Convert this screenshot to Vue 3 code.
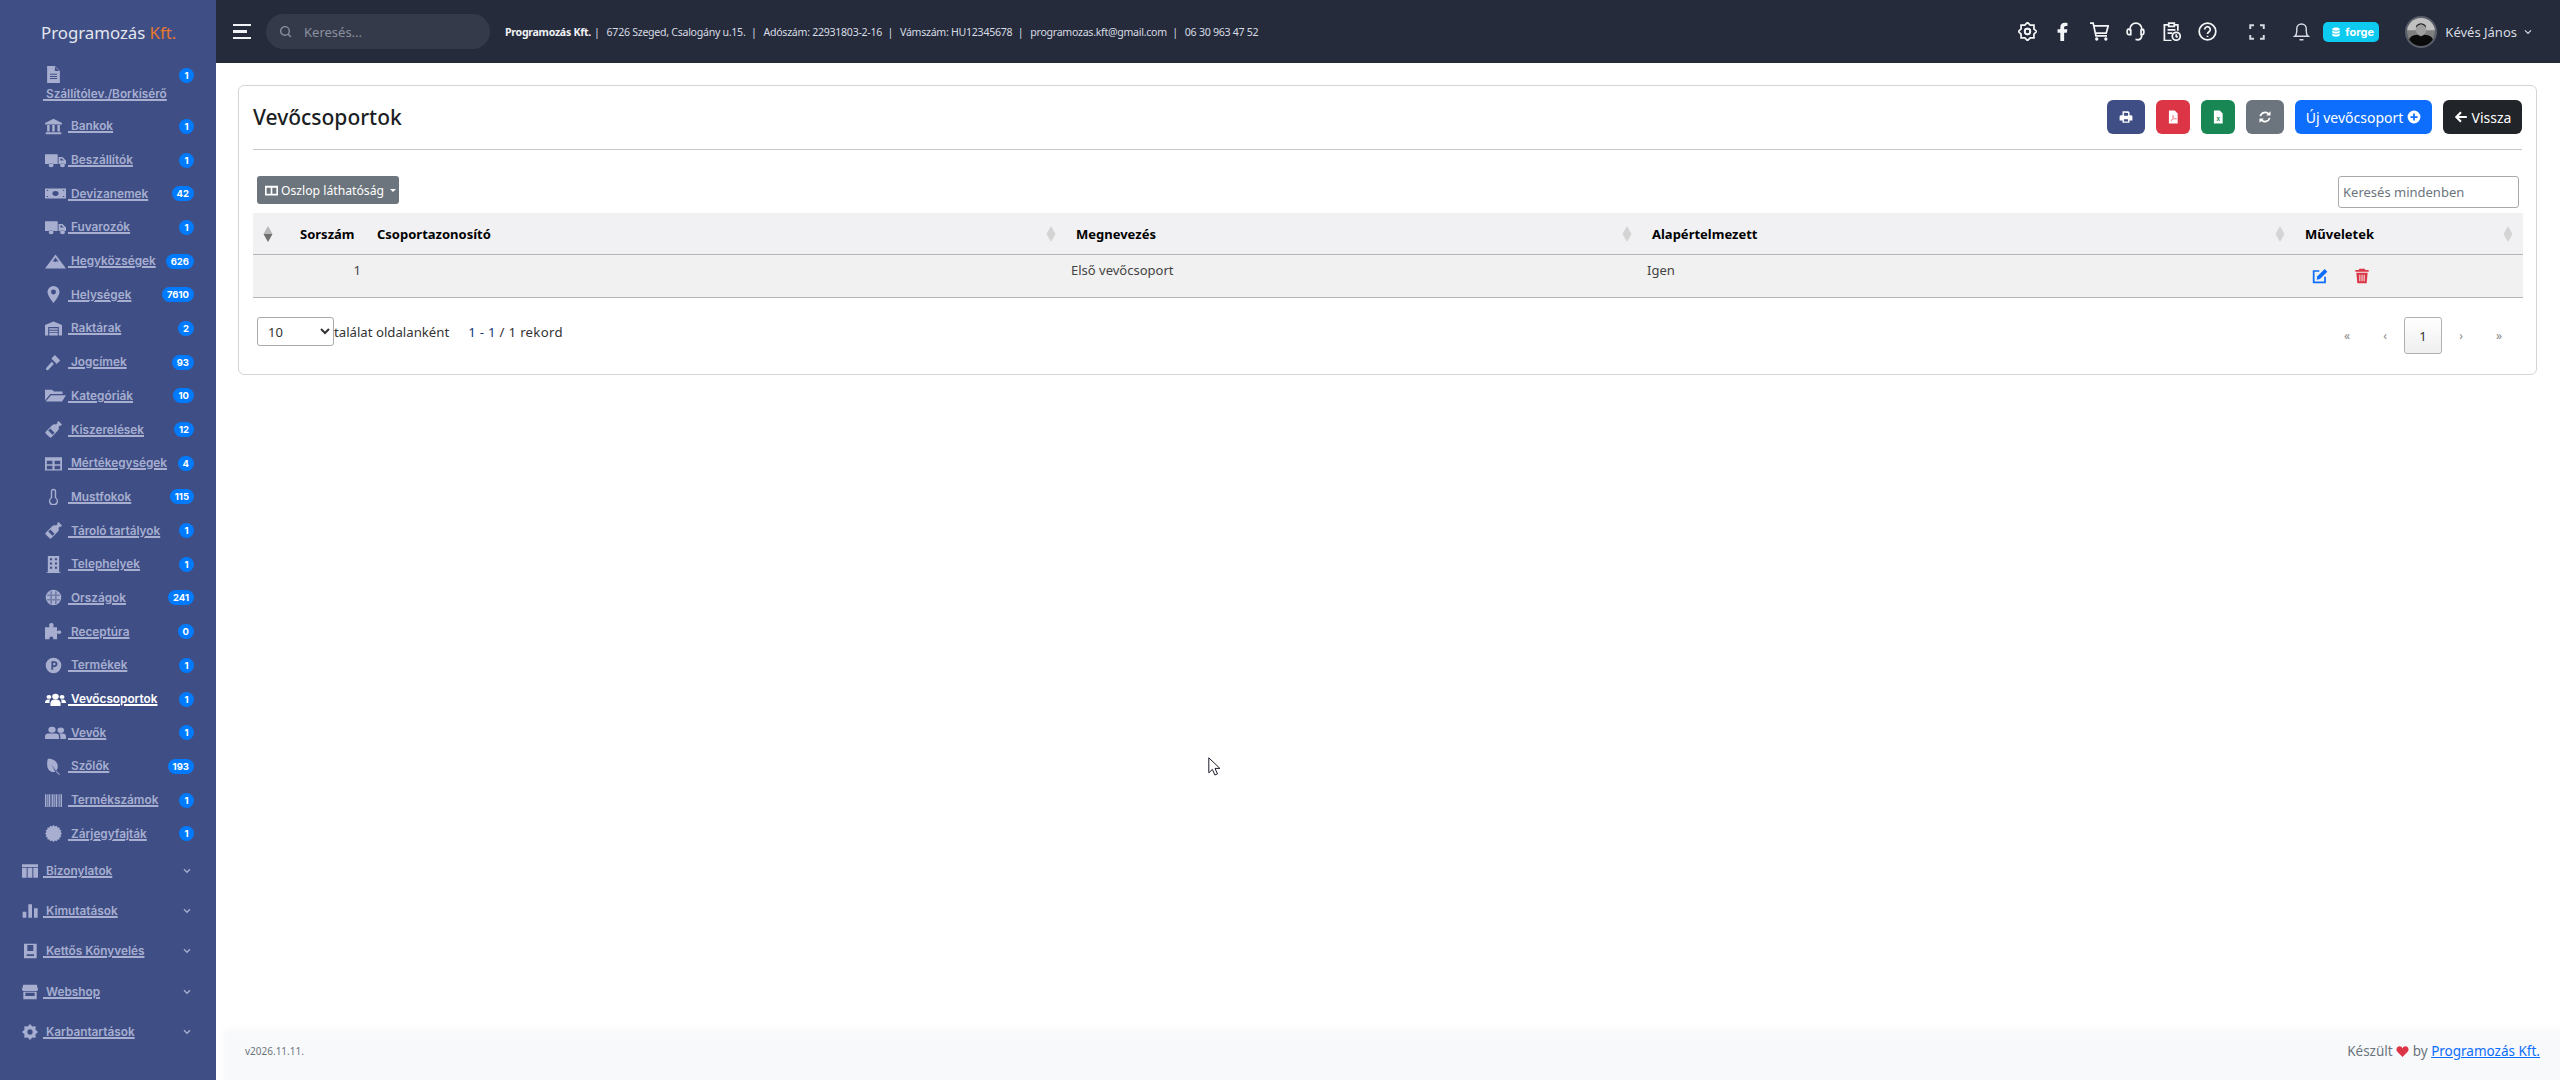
<script setup>
// csillag / fogaskerék alakzat generálása
function burst(n, R, r, hole) {
    let d = ''
    for (let i = 0; i < n * 2; i++) {
        const rad = i % 2 ? r : R
        const a = (Math.PI * i) / n
        d += (i ? 'L' : 'M') + (12 + rad * Math.sin(a)).toFixed(2) + ' ' + (12 - rad * Math.cos(a)).toFixed(2)
    }
    d += 'z'
    if (hole) {
        d += `M12 ${12 - hole}a${hole} ${hole} 0 1 0 0 ${hole * 2} ${hole} ${hole} 0 0 0 0-${hole * 2}z`
    }
    return d
}

const truck = 'M0 3h14.5v14H9.6a3 3 0 0 0-5.2 0H0zM15.5 7H20l4 5v5h-1.400a3 3 0 0 0-5.200 0h-1.900zM17.500 9v3h4l-2.400-3zM7 16a2.800 2.800 0 1 1 0 5.600A2.800 2.800 0 0 1 7 16zM20 16a2.800 2.800 0 1 1 0 5.600 2.800 2.800 0 0 1 0-5.600z'
const bottle = 'M19 0l5 5-2 2-.8-.8-2.200 2.200c1 2 .5 4-1 5.500L9 23a2 2 0 0 1-2.500 0L1 17.500a2 2 0 0 1 0-2.500l9.100-9c1.500-1.500 3.500-2 5.500-1l2.200-2.200-.8-.8zM7.500 10.500l6 6-3 3-6-6z'

const icons = {
    file: 'M3 0h11l7 7v17H3zM14 1v6h6zM7 11h10v1.500H7zM7 14h10v1.500H7zM7 17h10v1.500H7z',
    bank: 'M12 1l12 6v2H0V7zM3 10h3.500v9H3zM10.200 10h3.500v9h-3.500zM17.500 10H21v9h-3.500zM1 20h22v3H1z',
    truck,
    money: 'M0 5h24v14H0zM12 8.500a3.500 3.500 0 1 0 0 7 3.500 3.500 0 0 0 0-7zM2 7h1.500v1.500H2zM20.500 7H22v1.500h-1.500zM2 15.500h1.500V17H2zM20.500 15.500H22V17h-1.500z',
    mountain: 'M12 2l12 20H0zM12 6.500l-3.500 6 2.200-1 1.300 1.500 1.300-1.500 2.200 1z',
    marker: 'M12 0a8.500 8.500 0 0 1 8.500 8.500C20.500 14 12 24 12 24S3.500 14 3.500 8.500A8.500 8.500 0 0 1 12 0zM12 5a3.500 3.500 0 1 0 0 7 3.500 3.500 0 0 0 0-7z',
    warehouse: 'M0 7l12-5 12 5v15h-4.500V10h-15v12H0zM6 11.500h12v2.300H6zM6 15h12v2.300H6zM6 18.500h12V22H6z',
    gavel: 'M14 1.500L21.500 9l-5 5L9 6.500zM9.500 11l3 3-8 8.500q-1.500 1-2.700-.2-1-1.300-.1-2.500z',
    folder: 'M0 4h8l2.500 2.500H20V10H6L0 19zM6.800 11.500H24l-4.500 9H.8z',
    bottle,
    grid: 'M0 3h24v19H0zM2.500 8h8v5h-8zM13.500 8h8v5h-8zM2.500 15h8v5h-8zM13.500 15h8v5h-8z',
    thermo: 'M12 1a3.800 3.800 0 0 1 3.800 3.800v8.500a6.500 6.500 0 1 1-7.600 0V4.800A3.800 3.800 0 0 1 12 1zM12 3a1.800 1.800 0 0 0-1.800 1.800V14a4.500 4.500 0 1 0 3.600 0V4.800A1.800 1.800 0 0 0 12 3z',
    building: 'M4 0h16v23h2v1H2v-1h2zM7 3v3h3V3zM14 3v3h3V3zM7 9v3h3V9zM14 9v3h3V9zM7 15v3h3v-3zM14 15v3h3v-3z',
    globe: 'M12 1a11 11 0 1 0 0 22 11 11 0 0 0 0-22zM3 8h18v1.200H3zM3 14.800h18V16H3zM8 3h1.200v18H8zM14.800 3H16v18h-1.200z',
    puzzle: 'M0 6h6.500C5 3 6 0 9 0s4 3 2.500 6H17v5.500c2.500-1.500 6-1 6 1.500s-3.500 3-6 1.500V23H11.500c1-2-.5-4-2.500-4s-3.500 2-2.500 4H0z',
    product: 'M12 1a11 11 0 1 0 0 22 11 11 0 0 0 0-22zM9 6h4.500a4 4 0 0 1 0 8h-2v4H9zM11.500 8.500v3h2a1.500 1.500 0 0 0 0-3z',
    users: 'M12 4a3.800 3.800 0 1 1 0 7.600A3.800 3.800 0 0 1 12 4zM4.500 5.500a2.800 2.800 0 1 1 0 5.600 2.800 2.800 0 0 1 0-5.600zM19.500 5.500a2.800 2.800 0 1 1 0 5.600 2.800 2.800 0 0 1 0-5.600zM0 17q0-5 3.500-5H6Q4.500 14 5.200 17zM24 17q0-5-3.500-5H18q1.500 2 .8 5zM6.300 21q-1-8 3.700-9h4q4.700 1 3.700 9z',
    friends: 'M8 4a4.200 4.200 0 1 1 0 8.400A4.200 4.200 0 0 1 8 4zM18 5a3.800 3.800 0 1 1 0 7.600A3.800 3.800 0 0 1 18 5zM0 21v-3q0-4.500 4-4.500h8q4 0 4 4.500v3zM17.500 21v-4q0-2-1.500-3.500h4q4 0 4 4.500v3z',
    leaf: 'M4 1c8 0 14 4 14 11 0 3-1 5-2.500 6L9 9l5.500 10.500C9 21 3 17 3 9q0-5 1-8zM16 18.500l5 4.500-1 1-5-5z',
    barcode: 'M0 3h2v18H0zM3 3h1v18H3zM5 3h2v18H5zM8 3h1v18H8zM10 3h2v18h-2zM13 3h1v18h-1zM15 3h2v18h-2zM18 3h1v18h-1zM20 3h1v18h-1zM22 3h2v18h-2z',
    seal: burst(16, 12, 10.200),
    columns: 'M0 2h24v4H0zM0 7h7v15H0zM8.500 7h7v15h-7zM17 7h7v15h-7z',
    chart: 'M1 13h5.500v9H1zM9.500 2H15v20H9.500zM18 8h5.500v14H18z',
    book: 'M3 1h19v22H3zM8 3v9h9V3zM7 17h11v2.500H7z',
    store: 'M2 1h20l2 7q0 3-3 3H3q-3 0-3-3zM2 12h20v11H2zM5 13v5h14v-5z',
    cog: burst(8, 12, 9, 4)
}

const wideIcons = ['truck', 'money', 'mountain', 'folder', 'users', 'friends']

const items = [
    { label: 'Szállítólev./Borkísérő', icon: 'file', count: 1, wrap: true },
    { label: 'Bankok', icon: 'bank', count: 1 },
    { label: 'Beszállítók', icon: 'truck', count: 1 },
    { label: 'Devizanemek', icon: 'money', count: 42 },
    { label: 'Fuvarozók', icon: 'truck', count: 1 },
    { label: 'Hegyközségek', icon: 'mountain', count: 626 },
    { label: 'Helységek', icon: 'marker', count: 7610 },
    { label: 'Raktárak', icon: 'warehouse', count: 2 },
    { label: 'Jogcímek', icon: 'gavel', count: 93 },
    { label: 'Kategóriák', icon: 'folder', count: 10 },
    { label: 'Kiszerelések', icon: 'bottle', count: 12 },
    { label: 'Mértékegységek', icon: 'grid', count: 4 },
    { label: 'Mustfokok', icon: 'thermo', count: 115 },
    { label: 'Tároló tartályok', icon: 'bottle', count: 1 },
    { label: 'Telephelyek', icon: 'building', count: 1 },
    { label: 'Országok', icon: 'globe', count: 241 },
    { label: 'Receptúra', icon: 'puzzle', count: 0 },
    { label: 'Termékek', icon: 'product', count: 1 },
    { label: 'Vevőcsoportok', icon: 'users', count: 1, active: true },
    { label: 'Vevők', icon: 'friends', count: 1 },
    { label: 'Szőlők', icon: 'leaf', count: 193 },
    { label: 'Termékszámok', icon: 'barcode', count: 1 },
    { label: 'Zárjegyfajták', icon: 'seal', count: 1 }
]

const groups = [
    { label: 'Bizonylatok', icon: 'columns' },
    { label: 'Kimutatások', icon: 'chart' },
    { label: 'Kettős Könyvelés', icon: 'book' },
    { label: 'Webshop', icon: 'store' },
    { label: 'Karbantartások', icon: 'cog' }
]

const columns = [
    { label: '', width: 37, dark: true },
    { label: 'Sorszám', width: 77, noSort: true },
    { label: 'Csoportazonosító', width: 699 },
    { label: 'Megnevezés', width: 576 },
    { label: 'Alapértelmezett', width: 653 },
    { label: 'Műveletek', width: 228 }
]

const gearPath = burst(8, 11.500, 8.800, 3.500)
</script>

<template>
    <div class="app">
        <aside class="sidebar">
            <div class="logo">Programozás <span>Kft.</span></div>
            <nav class="nav">
                <div v-for="item in items" :key="item.label" class="item" :class="{ wrap: item.wrap, active: item.active }">
                    <a class="link" href="#" @click.prevent>
                        <svg class="icon" :class="{ wide: wideIcons.includes(item.icon) }" viewBox="0 0 24 24" preserveAspectRatio="none"><path :d="icons[item.icon]" /></svg>
                        <span class="text">&nbsp;{{ item.label }}</span>
                    </a>
                    <span class="badge">{{ item.count }}</span>
                </div>
                <div v-for="group in groups" :key="group.label" class="group">
                    <a class="link" href="#" @click.prevent>
                        <svg class="icon" viewBox="0 0 24 24"><path :d="icons[group.icon]" /></svg>
                        <span class="text">&nbsp;{{ group.label }}</span>
                    </a>
                    <svg class="chevron" viewBox="0 0 12 8"><path d="M1.500 1.500L6 6l4.500-4.500" /></svg>
                </div>
            </nav>
        </aside>

        <div class="main">
            <header class="topbar">
                <div class="burger"><i></i><i class="short"></i><i></i></div>
                <label class="top-search">
                    <svg viewBox="0 0 24 24"><circle cx="11" cy="11" r="8" /><path d="M17 17l5 5" /></svg>
                    <input type="text" placeholder="Keresés..." />
                </label>
                <div class="company">
                    <b>Programozás Kft.</b>
                    <span>|</span>6726 Szeged, Csalogány u.15.
                    <span>|</span>Adószám: 22931803-2-16
                    <span>|</span>Vámszám: HU12345678
                    <span>|</span>programozas.kft@gmail.com
                    <span>|</span>06 30 963 47 52
                </div>
                <div class="top-icons">
                    <svg class="ti" viewBox="0 0 24 24"><path :d="gearPath" /><circle cx="12" cy="12" r="3.500" /></svg>
                    <svg class="ti solid" viewBox="0 0 24 24"><path d="M8 24V13.500H4.500V9H8V6.500C8 3 10 1 13.500 1c1.700 0 3.500.3 3.500.3v3.900h-2c-1.700 0-2.200 1-2.200 2.100V9h4.100l-.7 4.500h-3.400V24z" /></svg>
                    <svg class="ti" viewBox="0 0 24 24"><path d="M0 1.500h4l3.500 16h14M5.500 5h17.500l-2.500 9H7" /><circle cx="8.500" cy="21.500" r="1" /><circle cx="20" cy="21.500" r="1" /></svg>
                    <svg class="ti" viewBox="0 0 24 24"><path d="M5 11V9a7.500 7.500 0 0 1 15 0v2M5 9H3.500a2 2 0 0 0-2 2v3a2 2 0 0 0 2 2H6V9M19 9h1.500a2 2 0 0 1 2 2v3a2 2 0 0 1-2 2H19V9M20 16c0 3-1.500 6-5 6.500l-3-.5" /></svg>
                    <svg class="ti" viewBox="0 0 24 24"><path d="M8.500 3.500H3v20h9M15.500 3.500H20V11M8.500 1.500h7v4h-7zM7 10h10M7 14h6" /><circle cx="18" cy="18" r="5" fill="#252b3b" /><path d="M18 15.500v2.700l1.800 1" /></svg>
                    <svg class="ti" viewBox="0 0 24 24"><circle cx="12" cy="12" r="10.500" /><path d="M8.500 9.500a3.500 3.500 0 1 1 5.500 2.800c-1.300.9-2 1.500-2 3M12 17.500v1.500" /></svg>
                </div>
                <svg class="ti full" viewBox="0 0 24 24"><path d="M3 8V3h5M16 3h5v5M21 16v5h-5M8 21H3v-5" /></svg>
                <svg class="ti bell" viewBox="0 0 24 24"><path d="M3.500 18c2-1.500 2.500-3.500 2.500-6V8.500a6 6 0 0 1 12 0V12c0 2.500.5 4.500 2.500 6zM9.500 22.500h5" /></svg>
                <span class="forge">
                    <svg viewBox="0 0 24 24"><path d="M12 1c5 0 9 1.500 9 4s-4 4-9 4-9-1.500-9-4 4-4 9-4zM3 8c1.500 2 5 3 9 3s7.500-1 9-3v4c0 2.500-4 4-9 4s-9-1.500-9-4zM3 15c1.500 2 5 3 9 3s7.500-1 9-3v4c0 2.500-4 4-9 4s-9-1.500-9-4z" /></svg>
                    forge
                </span>
                <div class="avatar">
                    <svg viewBox="0 0 32 32">
                        <rect width="32" height="32" fill="#7f7f7f" />
                        <rect width="32" height="14" fill="#c0c0c0" />
                        <ellipse cx="16" cy="13" rx="6" ry="7" fill="#9f9f9f" />
                        <path d="M10 11q6-8 12 0l-1-3q-5-4-10 0z" fill="#222" />
                        <path d="M1 32q0-13 11-13l4 2 4-2q11 0 11 13z" fill="#0a0a0a" />
                    </svg>
                </div>
                <span class="user">Kévés János</span>
                <svg class="user-chevron" viewBox="0 0 12 8"><path d="M1.500 1.500L6 6l4.500-4.500" /></svg>
            </header>

            <main class="content">
                <section class="card">
                    <div class="card-head">
                        <h1>Vevőcsoportok</h1>
                        <div class="actions">
                            <button class="btn icon-btn print">
                                <svg viewBox="0 0 24 24"><path fill="#fff" fill-rule="evenodd" d="M6 2h10l2 2v5h2.500A2.500 2.500 0 0 1 23 11.500V18h-5v4H6v-4H1v-6.500A2.500 2.500 0 0 1 3.500 9H6zM8.500 4.500V10h7V5zM8.500 16v3.500h7V16z" /></svg>
                            </button>
                            <button class="btn icon-btn pdf">
                                <svg viewBox="0 0 24 24"><path fill="#fff" d="M5 1h10l5 5v17H5z" /><path fill="none" stroke="#f58a8f" stroke-width="1.400" d="M8 19c3-2 5-7 4-10-1 4 3 7 6 6-3-1-7 1-10 4z" /></svg>
                            </button>
                            <button class="btn icon-btn excel">
                                <svg viewBox="0 0 24 24"><path fill="#fff" d="M5 1h10l5 5v17H5z" /><text x="12.500" y="19" text-anchor="middle" font-size="11" font-weight="700" fill="#198754" font-family="Liberation Sans, sans-serif">x</text></svg>
                            </button>
                            <button class="btn icon-btn refresh">
                                <svg viewBox="0 0 24 24"><path fill="none" stroke="#fff" stroke-width="3" d="M4 10.500A8.500 8.500 0 0 1 18.500 7M20 13.500A8.500 8.500 0 0 1 5.500 17" /><path fill="#fff" d="M21.500 2v7.500H14zM2.500 22v-7.500H10z" /></svg>
                            </button>
                            <button class="btn new">Új vevőcsoport
                                <svg viewBox="0 0 24 24"><path fill="#fff" fill-rule="evenodd" d="M12 1a11 11 0 1 0 0 22 11 11 0 0 0 0-22zM10.500 6h3v4.500H18v3h-4.500V18h-3v-4.500H6v-3h4.500z" /></svg>
                            </button>
                            <button class="btn back">
                                <svg viewBox="0 0 24 24"><path fill="none" stroke="#fff" stroke-width="3.600" d="M12 4l-8 8 8 8M4.500 12H22" /></svg>
                                Vissza
                            </button>
                        </div>
                    </div>

                    <div class="toolbar">
                        <button class="columns-btn">
                            <svg viewBox="0 0 24 24"><path fill="#fff" fill-rule="evenodd" d="M0 3h24v18H0zM3 7v11h7.500V7zM13.500 7v11H21V7z" /></svg>
                            Oszlop láthatóság
                            <i class="caret"></i>
                        </button>
                        <input class="filter" type="text" placeholder="Keresés mindenben" />
                    </div>

                    <table class="grid">
                        <colgroup>
                            <col v-for="col in columns" :key="col.label" :style="{ width: col.width + 'px' }" />
                        </colgroup>
                        <thead>
                            <tr>
                                <th v-for="col in columns" :key="col.label">
                                    <div class="th-inner">
                                        <span>{{ col.label }}</span>
                                        <svg v-if="!col.noSort" class="sort" :class="{ dark: col.dark }" viewBox="0 0 10 16">
                                            <path class="up" d="M5 0l4.500 8H.5z" />
                                            <path class="down" d="M5 16l4.500-8H.5z" />
                                        </svg>
                                    </div>
                                </th>
                            </tr>
                        </thead>
                        <tbody>
                            <tr>
                                <td></td>
                                <td class="num">1</td>
                                <td></td>
                                <td>Első vevőcsoport</td>
                                <td>Igen</td>
                                <td>
                                    <div class="row-actions">
                                        <svg viewBox="0 0 24 24"><path fill="none" stroke="#0d6efd" stroke-width="2.600" d="M11 4.500H2.500v17h17V13" /><path fill="#0d6efd" d="M19 1.500l4 4-11 11-5 1 1-5z" /></svg>
                                        <svg viewBox="0 0 24 24"><path fill="#dc3545" fill-rule="evenodd" d="M8 1h8l1 2h5v2.500H2V3h5zM3.500 7h17L19 23H5zM8 10v10h1.500V10zM11.300 10v10h1.500V10zM14.500 10v10H16V10z" /></svg>
                                    </div>
                                </td>
                            </tr>
                        </tbody>
                    </table>

                    <div class="pager-row">
                        <div class="per-page">
                            <select class="size"><option>10</option></select>
                            <span>találat oldalanként</span>
                            <span class="range"><em>1 - 1</em> / 1 rekord</span>
                        </div>
                        <div class="pager">
                            <span>«</span><span>‹</span><span class="current">1</span><span>›</span><span>»</span>
                        </div>
                    </div>
                </section>
            </main>

            <footer class="footer">
                <span class="version">v2026.11.11.</span>
                <span class="credit">Készült
                    <svg viewBox="0 0 24 24"><path fill="#dc3545" d="M12 22L2.500 12.500C-1 8.500 1.500 2.500 6.500 2.500c2.500 0 4.500 1.500 5.500 3.500 1-2 3-3.500 5.500-3.500 5 0 7.500 6 4 10z" /></svg>
                    by <a href="#" @click.prevent>Programozás Kft.</a></span>
            </footer>
        </div>

        <svg class="cursor" viewBox="0 0 12 19"><path d="M.8.800v15l3.600-3.400 2.500 5.600 2.600-1.100-2.500-5.500h4.900z" fill="#fff" stroke="#1c1c2c" stroke-width="1" /></svg>
    </div>
</template>

<style>
html,
body {
    margin: 0;
    background: #fff;
}
</style>

<style scoped>
.app {
    position: relative;
    display: flex;
    height: 1080px;
    overflow: hidden;
    font-family: "Noto Sans", "Open Sans", sans-serif;
    color: #212529;
}

.sidebar {
    width: 216px;
    flex-shrink: 0;
    background: #3f4f85;
    overflow: hidden;
}

.logo {
    height: 64px;
    line-height: 66px;
    padding-left: 41px;
    font-size: 16.8px;
    color: #e4e6ee;
}

.logo span {
    color: #e5762f;
}

.nav {
    font-family: Inter, "Noto Sans", sans-serif;
    font-size: 11.8px;
    font-weight: 600;
    color: #a7aed0;
}

.item {
    height: 33.7px;
    display: flex;
    align-items: center;
    justify-content: space-between;
    padding: 0 22px 0 45px;
}

.item.wrap {
    height: 45.5px;
    align-items: flex-start;
}

.item.wrap .link {
    display: block;
    width: 124px;
    margin-top: 2px;
}

.item.wrap .icon {
    display: block;
    margin-bottom: 4px;
}

.item.wrap .text {
    margin-left: -2px;
}

.item.wrap .badge {
    margin-top: 4px;
}

.item.active {
    color: #fff;
}

.link {
    display: flex;
    align-items: center;
    color: inherit;
    white-space: nowrap;
}

.icon {
    width: 17px;
    height: 17px;
    margin-right: 6px;
    flex-shrink: 0;
    fill: currentColor;
    fill-rule: evenodd;
}

.icon.wide {
    width: 21px;
    margin-right: 2px;
}

.text {
    text-decoration: underline;
    text-underline-offset: 2px;
}

.badge {
    min-width: 15px;
    height: 15px;
    padding: 0 5px;
    box-sizing: border-box;
    border-radius: 8px;
    background: #007bff;
    color: #fff;
    font-size: 9.5px;
    font-weight: 700;
    line-height: 15px;
    text-align: center;
}

.group {
    height: 40.3px;
    display: flex;
    align-items: center;
    justify-content: space-between;
    padding: 0 25px 0 22px;
}

.group .icon {
    width: 16px;
    height: 16px;
    margin-right: 5px;
}

.chevron {
    width: 8px;
    height: 6px;
    fill: none;
    stroke: #a7aed0;
    stroke-width: 2;
}

.main {
    flex: 1;
    min-width: 0;
    display: flex;
    flex-direction: column;
}

.topbar {
    height: 63px;
    flex-shrink: 0;
    display: flex;
    align-items: center;
    padding: 0 0 0 17px;
    background: #252b3b;
    color: #e0e3ea;
}

.burger {
    width: 18px;
    display: flex;
    flex-direction: column;
    gap: 4px;
}

.burger i {
    display: block;
    height: 2.500px;
    background: #f1f2f5;
}

.burger i.short {
    width: 14px;
}

.top-search {
    width: 224px;
    height: 35px;
    margin-left: 15px;
    padding-left: 13px;
    box-sizing: border-box;
    display: flex;
    align-items: center;
    gap: 10px;
    background: #343a4a;
    border-radius: 18px;
}

.top-search svg {
    width: 13px;
    height: 13px;
    flex-shrink: 0;
    fill: none;
    stroke: #8a909e;
    stroke-width: 2.600;
}

.top-search input {
    width: 160px;
    border: 0;
    outline: 0;
    background: none;
    font: 13px "Noto Sans", sans-serif;
    color: #fff;
}

.top-search input::placeholder {
    color: #8a909e;
}

.company {
    margin-left: 15px;
    font-size: 10.6px;
    letter-spacing: -0.28px;
    white-space: nowrap;
    color: #d8dbe3;
}

.company b {
    color: #f1f2f5;
}

.company span {
    margin: 0 7px 0 3px;
}

.top-icons {
    margin-left: auto;
    display: flex;
    align-items: center;
    gap: 17px;
}

.ti {
    width: 19px;
    height: 19px;
    fill: none;
    stroke: #f4f5f7;
    stroke-width: 2.200;
    flex-shrink: 0;
}

.ti.solid {
    fill: #f4f5f7;
    stroke: none;
}

.full {
    margin-left: 31px;
    width: 18px;
    height: 18px;
    stroke: #d8dbe3;
    stroke-width: 2.600;
}

.bell {
    margin-left: 26px;
    stroke: #d8dbe3;
    stroke-width: 1.800;
}

.forge {
    width: 56px;
    height: 20px;
    margin-left: 12px;
    box-sizing: border-box;
    padding-left: 8px;
    display: flex;
    align-items: center;
    gap: 4px;
    background: #0dcaf0;
    border-radius: 5px;
    color: #fff;
    font-family: Inter, sans-serif;
    font-size: 11px;
    font-weight: 700;
}

.forge svg {
    width: 10px;
    height: 10px;
    fill: #fff;
}

.avatar {
    width: 32px;
    height: 32px;
    margin-left: 26px;
    box-sizing: border-box;
    border: 2px solid #5a5f6b;
    border-radius: 50%;
    overflow: hidden;
    flex-shrink: 0;
}

.avatar svg {
    display: block;
    width: 100%;
    height: 100%;
}

.user {
    margin-left: 8px;
    font-size: 13px;
    color: #d8dbe3;
    white-space: nowrap;
}

.user-chevron {
    width: 8px;
    height: 6px;
    margin: 0 28px 0 7px;
    fill: none;
    stroke: #d8dbe3;
    stroke-width: 1.800;
}

.content {
    flex: 1;
    padding: 22px 23px 0 22px;
}

.card {
    border: 1px solid #d5d5d5;
    border-radius: 6px;
    padding: 14px 14px 0;
    height: 290px;
    box-sizing: border-box;
}

.card-head {
    display: flex;
    align-items: center;
    justify-content: space-between;
    height: 50px;
    padding-bottom: 15px;
    box-sizing: border-box;
    border-bottom: 1px solid #c8c8c8;
}

.card-head h1 {
    margin: 0;
    font-size: 21px;
    font-weight: 500;
    color: #1a1e24;
}

.actions {
    display: flex;
    gap: 11px;
}

.btn {
    height: 34px;
    border: 0;
    border-radius: 6px;
    padding: 0;
    display: flex;
    align-items: center;
    justify-content: center;
    gap: 4px;
    color: #fff;
    font: 14px "Noto Sans", sans-serif;
    white-space: nowrap;
}

.btn svg {
    width: 14px;
    height: 14px;
}

.icon-btn.print,
.icon-btn.refresh {
    width: 38px;
}

.icon-btn.pdf,
.icon-btn.excel {
    width: 34px;
}

.print {
    background: #3f4f85;
}

.pdf {
    background: #dc3545;
}

.excel {
    background: #198754;
}

.refresh {
    background: #6c757d;
}

.new {
    width: 137px;
    background: #0d6efd;
}

.back {
    width: 79px;
    background: #212529;
}

.toolbar {
    display: flex;
    align-items: flex-start;
    justify-content: space-between;
    padding: 26px 3px 0 4px;
    height: 63px;
    box-sizing: border-box;
}

.columns-btn {
    width: 142px;
    height: 28px;
    border: 0;
    border-radius: 3px;
    padding: 0 0 0 8px;
    display: flex;
    align-items: center;
    gap: 3px;
    background: #6c757d;
    color: #fff;
    font: 12.2px "Noto Sans", sans-serif;
    white-space: nowrap;
}

.columns-btn svg {
    width: 13px;
    height: 13px;
}

.caret {
    margin-left: 3px;
    border-top: 3px solid #fff;
    border-left: 3px solid transparent;
    border-right: 3px solid transparent;
}

.filter {
    width: 181px;
    height: 32px;
    box-sizing: border-box;
    border: 1px solid #aaa;
    border-radius: 3px;
    padding: 0 4px;
    outline: 0;
    font: 13px "Noto Sans", sans-serif;
}

.filter::placeholder {
    color: #6c757d;
}

.grid {
    width: 2270px;
    table-layout: fixed;
    border-collapse: collapse;
    font-size: 13px;
}

.grid th {
    height: 41px;
    padding: 0 10px;
    background: #f1f1f3;
    border-bottom: 1px solid #b5b5b5;
    text-align: left;
    font-weight: 700;
    color: #000;
}

.grid th:first-child {
    padding-right: 17px;
}

.th-inner {
    display: flex;
    align-items: center;
    justify-content: space-between;
    white-space: nowrap;
}

.sort {
    width: 10px;
    height: 16px;
    flex-shrink: 0;
}

.sort path {
    fill: #d4d4d4;
}

.sort.dark .down {
    fill: #6f6f6f;
}

.sort.dark .up {
    fill: #b8b8b8;
}

.grid td {
    height: 43px;
    padding: 6px 5px 0;
    box-sizing: border-box;
    vertical-align: top;
    background: #f1f1f1;
    border-bottom: 1px solid #b5b5b5;
    color: #444;
}

.grid td.num {
    text-align: right;
    padding-right: 6px;
}

.row-actions {
    display: flex;
    gap: 26px;
    padding: 7px 0 0 12px;
}

.row-actions svg {
    width: 16px;
    height: 16px;
}

.pager-row {
    display: flex;
    align-items: flex-start;
    justify-content: space-between;
    padding: 19px 4px 0 4px;
}

.per-page {
    display: flex;
    align-items: center;
    font-size: 13.2px;
    color: #333;
}

.size {
    width: 77px;
    height: 29px;
    border: 1px solid #aaa;
    border-radius: 3px;
    background: #fff;
    padding: 0 0 0 6px;
    font: 13px "Noto Sans", sans-serif;
    color: #333;
}

.range {
    margin-left: 19px;
    letter-spacing: 0.3px;
}

.range em {
    font-style: normal;
    color: #123a7a;
}

.pager {
    display: flex;
    align-items: center;
    color: #888;
    font-size: 12px;
}

.pager span {
    width: 38px;
    height: 37px;
    display: flex;
    align-items: center;
    justify-content: center;
}

.pager .current {
    box-sizing: border-box;
    border: 1px solid #b0b0b0;
    border-radius: 3px;
    background: linear-gradient(#fff, #efefef);
    color: #333;
    font-size: 13px;
}

.footer {
    height: 58px;
    flex-shrink: 0;
    display: flex;
    align-items: center;
    justify-content: space-between;
    padding: 0 20px 0 29px;
    background: #f8f9fb;
    box-shadow: inset 8px 8px 9px -1px #fff;
}

.version {
    font-size: 10px;
    color: #6c757d;
}

.credit {
    font-size: 13.500px;
    color: #6c757d;
}

.credit svg {
    width: 13px;
    height: 13px;
    vertical-align: -2px;
}

.credit a {
    color: #0d6efd;
}

.cursor {
    position: absolute;
    left: 1208px;
    top: 757px;
    width: 12px;
    height: 19px;
}
</style>
